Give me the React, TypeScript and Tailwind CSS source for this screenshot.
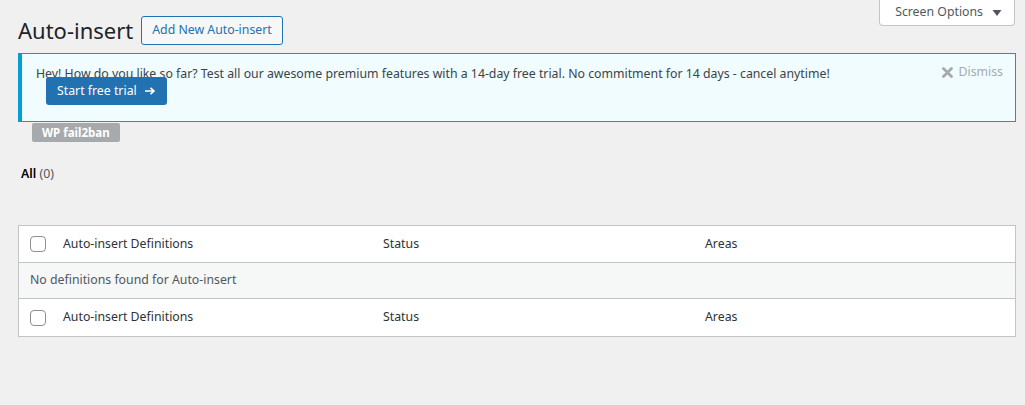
import React from "react";

const font = { fontFamily: '"Noto Sans", "Open Sans", sans-serif' };

function Checkbox() {
  return <span className="block h-[16px] w-[16px] rounded-[4px] border border-[#8c8f94] bg-white" />;
}

function HeaderRow({ last }: { last?: boolean }) {
  return (
    <div
      className={`grid grid-cols-[36px_320px_322px_1fr] items-center bg-white text-[12.3px] text-[#2c3338] ${
        last ? "h-[38px] border-t border-[#c3c4c7]" : "h-[37px] border-b border-[#c3c4c7]"
      }`}
    >
      <div className="pl-[11px]">
        <Checkbox />
      </div>
      <div className="pl-[8px]">Auto-insert Definitions</div>
      <div className="pl-[8px]">Status</div>
      <div className="pl-[8px]">Areas</div>
    </div>
  );
}

export default function App() {
  return (
    <div className="relative min-h-screen bg-[#f0f0f1] text-[#3c434a]" style={font}>
      <button className="absolute right-[10px] top-0 flex h-[26px] items-center gap-[9px] rounded-b-[4px] border border-t-0 border-[#c3c4c7] bg-white pl-[15px] pr-[12px] text-[12.3px] text-[#50575e]">
        Screen Options
        <svg width="10" height="8" viewBox="0 0 10 8">
          <path d="M0.5 1h9L5 7z" fill="#50575e" />
        </svg>
      </button>

      <div className="pl-[18px] pr-[9px]">
        <div className="flex items-center gap-[8px] pt-[16px]">
          <h1 className="text-[22px] font-normal leading-[29px] text-[#1d2327]">Auto-insert</h1>
          <button className="h-[29px] rounded-[3px] border border-[#2271b1] bg-[#f6f7f7] px-[10px] text-[12.3px] text-[#2271b1]">
            Add New Auto-insert
          </button>
        </div>

        <div className="relative mt-[8px] h-[69px] border border-l-4 border-[#00a0d2] bg-[#f0fcfd] pl-[14px] pt-[10px]">
          <p className="text-[12.3px] leading-[19px] text-[#3c434a]">
            Hey! How do you like so far? Test all our awesome premium features with a 14-day free trial. No
            commitment for 14 days - cancel anytime!
          </p>
          <button className="relative ml-[10px] mt-[-6px] flex h-[28px] items-center gap-[8px] rounded-[3px] bg-[#2271b1] px-[11px] text-[12.3px] text-white">
            Start free trial
            <svg width="11" height="10" viewBox="0 0 12 10">
              <path d="M0 5h9M6 1.5L9.8 5 6 8.5" stroke="white" strokeWidth="1.8" fill="none" />
            </svg>
          </button>
          <div className="absolute right-[12px] top-[9px] flex items-center gap-[6px] text-[12.3px] text-[#a7aaad]">
            <svg width="11" height="11" viewBox="0 0 11 11">
              <path d="M1.5 1.5l8 8M9.5 1.5l-8 8" stroke="#a7aaad" strokeWidth="2.8" strokeLinecap="round" />
            </svg>
            Dismiss
          </div>
        </div>

        <div className="ml-[14px] mt-[1px] block h-[19px] w-fit rounded-[2px] bg-[#a7aaad] px-[10px] text-[11.5px] font-bold leading-[19px] text-white">
          WP fail2ban
        </div>

        <div className="ml-[3px] mt-[22px] text-[12.3px] leading-[20px]">
          <span className="font-semibold text-black">All</span> <span className="text-[#50575e]">(0)</span>
        </div>

        <div className="mt-[41px] border border-[#c3c4c7] bg-white">
          <HeaderRow />
          <div className="flex h-[35px] items-center bg-[#f6f7f7] pl-[11px] text-[12.3px] text-[#50575e]">
            No definitions found for Auto-insert
          </div>
          <HeaderRow last />
        </div>
      </div>
    </div>
  );
}
